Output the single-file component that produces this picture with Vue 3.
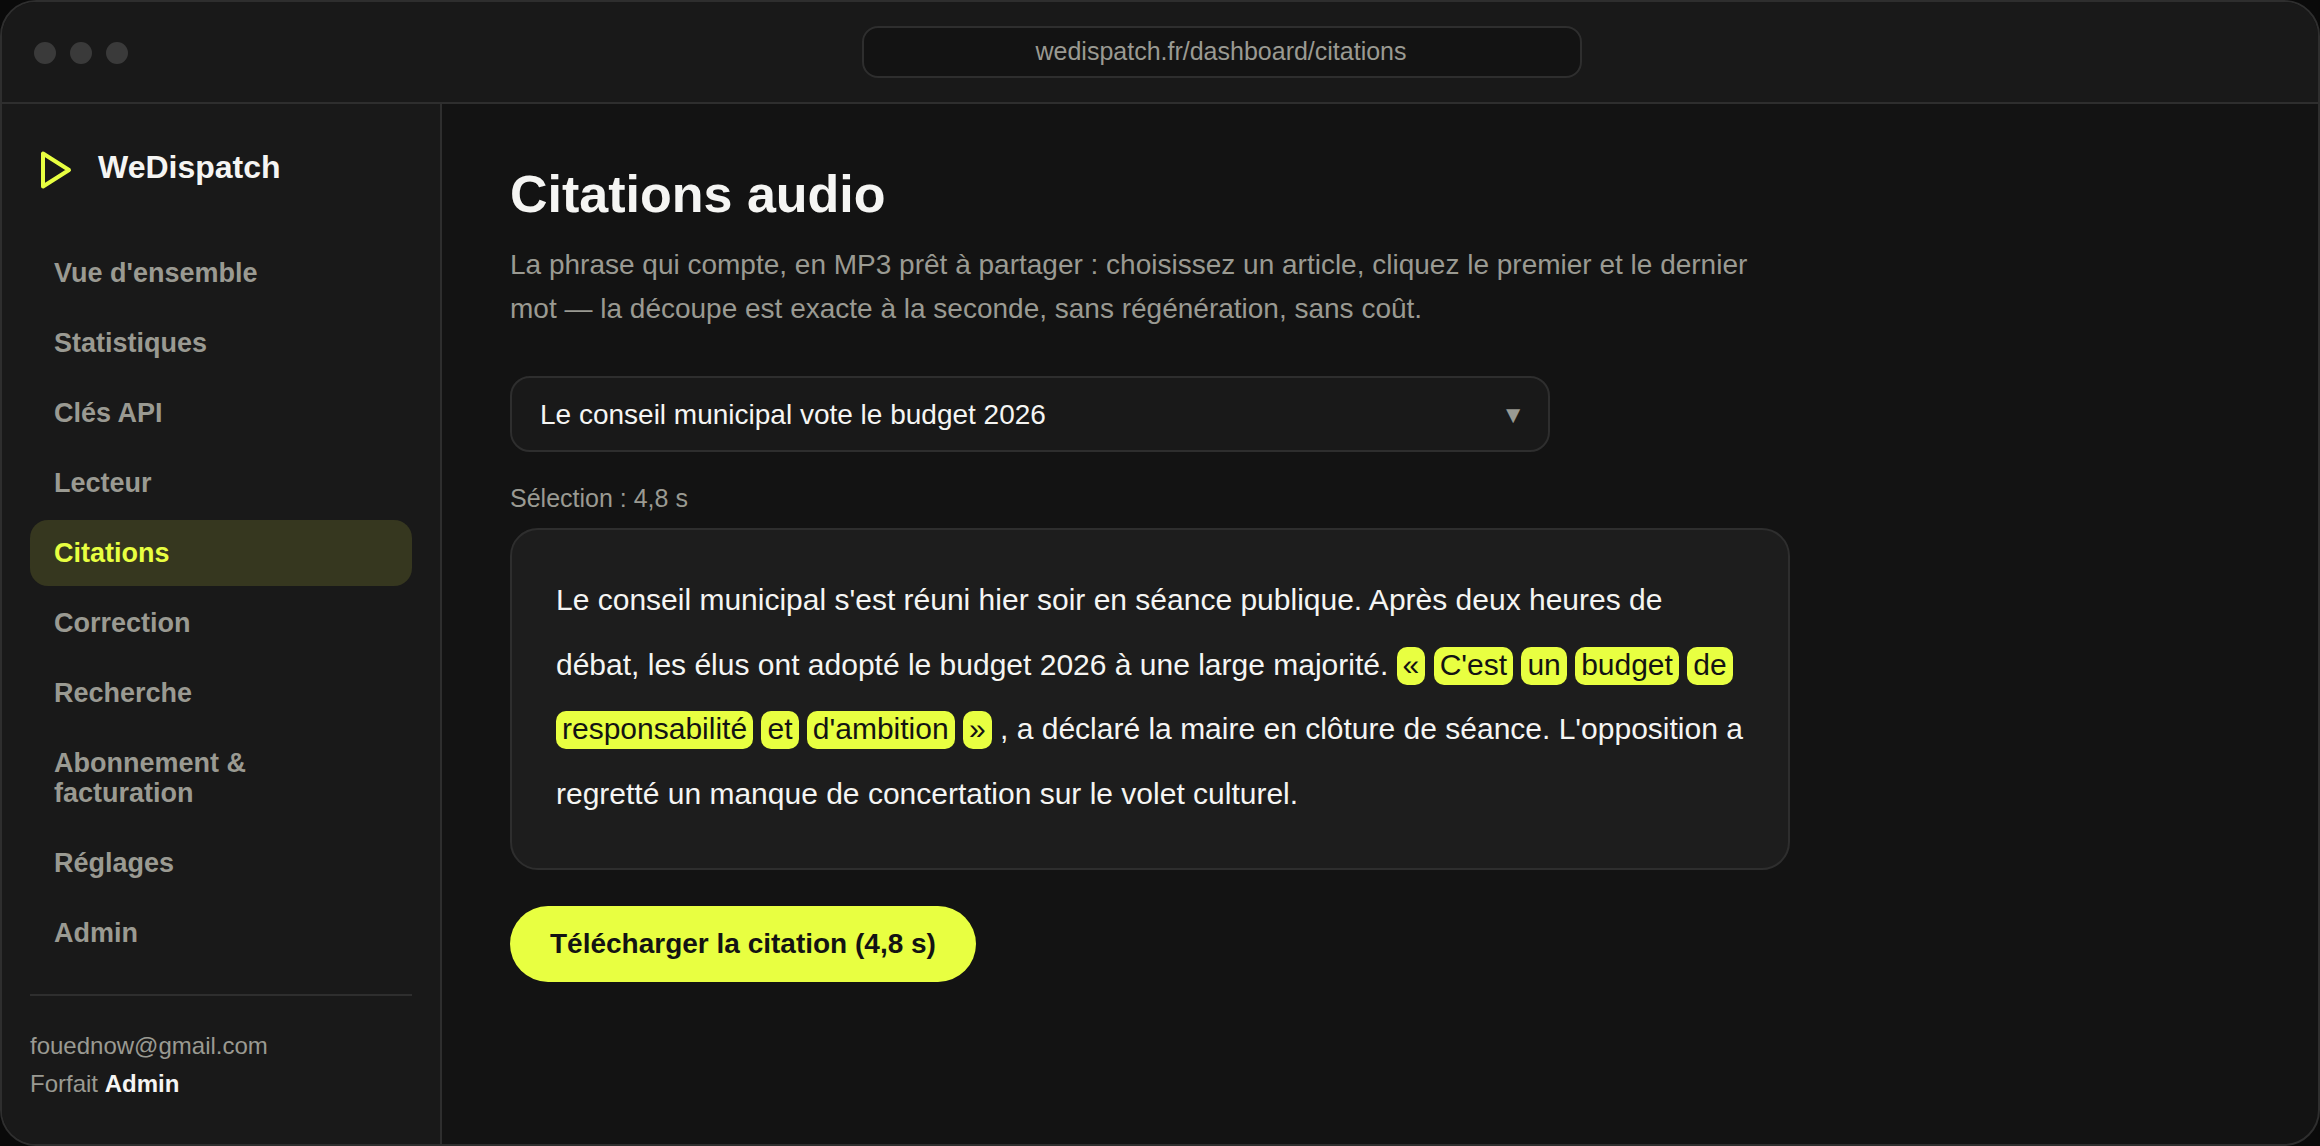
<template>
    <div class="window">
        <header class="titlebar">
            <div class="dots">
                <span v-for="n in 3" :key="n" class="dot"></span>
            </div>
            <div class="address">wedispatch.fr/dashboard/citations</div>
        </header>

        <div class="body">
            <aside class="sidebar">
                <div class="brand">
                    <svg class="logo" width="34" height="42" viewBox="0 0 34 42" fill="none">
                        <path d="M4 4.5V37.5L30 21Z" stroke="#e8ff41" stroke-width="4" stroke-linejoin="round" />
                    </svg>
                    <span class="brand-name">WeDispatch</span>
                </div>

                <nav class="nav">
                    <a
                        v-for="item in menu"
                        :key="item"
                        class="nav-item"
                        :class="{ active: item === current }"
                        @click="current = item"
                    >{{ item }}</a>
                </nav>

                <div class="account">
                    <div>fouednow@gmail.com</div>
                    <div>Forfait <strong>Admin</strong></div>
                </div>
            </aside>

            <main class="content">
                <h1>Citations audio</h1>
                <p class="intro">
                    La phrase qui compte, en MP3 prêt à partager : choisissez un article, cliquez le premier et le dernier
                    mot — la découpe est exacte à la seconde, sans régénération, sans coût.
                </p>

                <div class="select">
                    <span>Le conseil municipal vote le budget 2026</span>
                    <span class="caret">▼</span>
                </div>

                <div class="selection">Sélection : {{ duration }}</div>

                <div class="transcript">
                    {{ before }}
                    <template v-for="(word, i) in quote" :key="i"><span class="word">{{ word }}</span>{{ ' ' }}</template>
                    {{ after }}
                </div>

                <button class="download">Télécharger la citation ({{ duration }})</button>
            </main>
        </div>
    </div>
</template>

<script setup>
import { ref } from 'vue';

const menu = [
    "Vue d'ensemble",
    'Statistiques',
    'Clés API',
    'Lecteur',
    'Citations',
    'Correction',
    'Recherche',
    'Abonnement & facturation',
    'Réglages',
    'Admin',
];
const current = ref('Citations');

const duration = '4,8 s';

// Article text, split around the selected words
const before =
    "Le conseil municipal s'est réuni hier soir en séance publique. Après deux heures de débat, les élus ont adopté le budget 2026 à une large majorité.";
const quote = ['«', "C'est", 'un', 'budget', 'de', 'responsabilité', 'et', "d'ambition", '»'];
const after =
    ", a déclaré la maire en clôture de séance. L'opposition a regretté un manque de concertation sur le volet culturel.";
</script>

<style>
body {
    margin: 0;
    background: #0a0a0a;
}
</style>

<style scoped>
.window {
    box-sizing: border-box;
    display: flex;
    flex-direction: column;
    width: 2320px;
    height: 1146px;
    border: 2px solid #2e2e2e;
    border-radius: 36px;
    overflow: hidden;
    background: #131313;
    color: #f5f5f3;
    font-family: "Liberation Sans", Arial, sans-serif;
}

/* Title bar */
.titlebar {
    display: flex;
    align-items: center;
    gap: 30px;
    height: 100px;
    padding: 0 32px;
    background: #191919;
    border-bottom: 2px solid #2e2e2e;
}

.dots {
    display: flex;
    gap: 14px;
    padding-top: 2px;
}

.dot {
    width: 22px;
    height: 22px;
    border-radius: 50%;
    background: #3a3a3a;
}

.address {
    box-sizing: border-box;
    width: 720px;
    height: 52px;
    margin: 0 auto;
    padding-right: 2px;
    border: 2px solid #2e2e2e;
    border-radius: 16px;
    background: #131313;
    color: #9a9a92;
    font-size: 25px;
    line-height: 46px;
    text-align: center;
}

.body {
    display: flex;
    flex: 1;
    min-height: 0;
}

/* Sidebar */
.sidebar {
    box-sizing: border-box;
    width: 440px;
    padding: 44px 28px 0;
    background: #191919;
    border-right: 2px solid #2e2e2e;
}

.brand {
    display: flex;
    gap: 25px;
    height: 92px;
    padding-left: 9px;
}

.logo {
    margin-top: 1px;
}

.brand-name {
    font-size: 32px;
    font-weight: 700;
    line-height: 38px;
}

.nav {
    display: flex;
    flex-direction: column;
    gap: 4px;
}

.nav-item {
    padding: 18px 24px;
    border-radius: 18px;
    color: #9a9a92;
    font-size: 27px;
    font-weight: 600;
    line-height: 30px;
    cursor: pointer;
}

.nav-item.active {
    background: #36371f;
    color: #e8ff41;
}

.account {
    margin-top: 28px;
    padding-top: 31px;
    border-top: 2px solid #2e2e2e;
    color: #9a9a92;
    font-size: 24px;
    line-height: 38px;
}

.account strong {
    color: #f5f5f3;
}

/* Main area */
.content {
    flex: 1;
    padding: 60px 68px;
}

h1 {
    margin: 0 0 19px;
    font-size: 52px;
    line-height: 60px;
}

.intro {
    width: 1280px;
    margin: 0 0 45px;
    color: #9a9a92;
    font-size: 28px;
    line-height: 44px;
}

.select {
    box-sizing: border-box;
    display: flex;
    align-items: center;
    justify-content: space-between;
    width: 1040px;
    height: 76px;
    padding: 2px 28px 0;
    border: 2px solid #2e2e2e;
    border-radius: 20px;
    background: #191919;
    font-size: 28px;
}

.caret {
    margin-right: -5px;
    color: #9a9a92;
    font-size: 24px;
}

.selection {
    margin: 32px 0 16px;
    color: #9a9a92;
    font-size: 25px;
    line-height: 28px;
}

.transcript {
    box-sizing: border-box;
    width: 1280px;
    padding: 38px 44px 42px;
    border: 2px solid #2e2e2e;
    border-radius: 28px;
    background: #1d1d1d;
    font-size: 30px;
    line-height: 64.5px;
}

.word {
    padding: 1px 6px 4px;
    border-radius: 10px;
    background: #e8ff41;
    color: #131313;
}

.download {
    display: block;
    height: 76px;
    margin-top: 36px;
    padding: 0 40px;
    border: none;
    border-radius: 38px;
    background: #e8ff41;
    color: #131313;
    font-family: inherit;
    font-size: 28px;
    font-weight: 700;
}
</style>
